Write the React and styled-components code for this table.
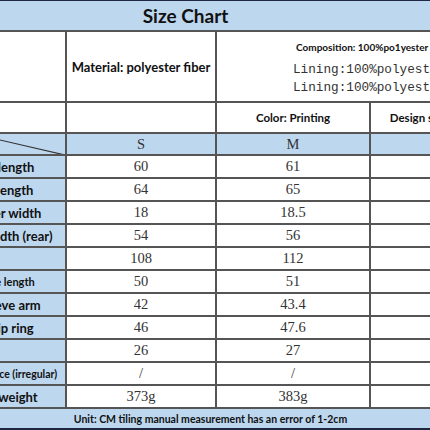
import React from 'react'
import styled, { createGlobalStyle } from 'styled-components'

const colors = {
  blue: '#bdd7ee',
  line: '#555',
  navy: '#1f2840',
  text: '#111',
  value: '#333',
}

const GlobalStyle = createGlobalStyle`
  html, body {
    margin: 0;
    padding: 0;
    background: #fff;
    overflow: hidden;
  }
`

const Viewport = styled.div`
  width: 430px;
  height: 430px;
  overflow: hidden;
  background: #fff;
`

const Sheet = styled.div`
  display: grid;
  grid-template-columns: 145px 148px 152px 150px;
  grid-template-rows: 29px 69px 29px 20px repeat(11, 21px) 19px;
  gap: 2px;
  width: max-content;
  margin-left: -80px;
  background: ${colors.line};
  border-top: 1px solid ${colors.navy};
  border-bottom: 2px solid ${colors.navy};
`

const Cell = styled.div`
  grid-column: span ${(p) => p.$span || 1};
  background: ${(p) => (p.$blue ? colors.blue : '#fff')};
  display: flex;
  align-items: center;
  justify-content: center;
  overflow: hidden;
  white-space: nowrap;
  position: relative;
`

const Title = styled(Cell)`
  padding-right: 70px;
  font-family: Lato, 'Liberation Sans', sans-serif;
  font-weight: 700;
  font-size: 19px;
  color: ${colors.text};
`

const Footer = styled(Cell)`
  padding-right: 20px;
  font-family: Lato, 'Liberation Sans', sans-serif;
  font-weight: 700;
  font-size: 10.5px;
  color: ${colors.text};
`

const Heading = styled(Cell)`
  font-family: Lato, 'Liberation Sans', sans-serif;
  font-weight: 700;
  font-size: ${(p) => p.$size || 13}px;
  color: ${colors.text};
`

const Composition = styled(Cell)`
  flex-direction: column;
  align-items: flex-start;
  justify-content: flex-start;
  padding: 9px 0 0 76px;
`

const CompTitle = styled.span`
  font-family: Lato, 'Liberation Sans', sans-serif;
  font-weight: 700;
  font-size: 10px;
  color: ${colors.text};
  margin: 0 0 8px 3px;
`

const Lining = styled.span`
  font-family: 'Liberation Mono', monospace;
  font-size: 12.7px;
  line-height: 18px;
  color: ${colors.value};
`

const Label = styled(Cell)`
  font-family: Lato, 'Liberation Sans', sans-serif;
  font-weight: 700;
  font-size: ${(p) => p.$size || 13}px;
  color: ${colors.text};
`

const Value = styled(Cell)`
  font-family: 'Liberation Serif', serif;
  font-size: 14.5px;
  color: ${colors.value};
`

const Diagonal = styled.svg`
  position: absolute;
  inset: 0;
  width: 100%;
  height: 100%;
`

const rows = [
  { label: 'Clothes length', s: '60', m: '61', l: '62' },
  { label: 'Overall length', s: '64', m: '65', l: '66' },
  { label: 'A shoulder width', s: '18', m: '18.5', l: '19' },
  { label: 'Garment width (rear)', s: '54', m: '56', l: '58' },
  { label: '', s: '108', m: '112', l: '116' },
  { label: 'Full sleeve length', s: '50', m: '51', l: '52', size: 11 },
  { label: 'Short sleeve arm', s: '42', m: '43.4', l: '44.8' },
  { label: 'Lower hip ring', s: '46', m: '47.6', l: '49.2' },
  { label: '', s: '26', m: '27', l: '28' },
  { label: 'Back elastic force (irregular)', s: '/', m: '/', l: '/', size: 10.5 },
  { label: 'Package weight', s: '373g', m: '383g', l: '393g' },
]

function App() {
  return (
    <Viewport>
      <GlobalStyle />
      <Sheet>
        <Title $span={4} $blue>Size Chart</Title>

        <Cell />
        <Heading>Material: polyester fiber</Heading>
        <Composition $span={2}>
          <CompTitle>Composition: 100%po1yester fiber</CompTitle>
          <Lining>Lining:100%polyester fiber</Lining>
          <Lining>Lining:100%polyester fiber</Lining>
        </Composition>

        <Cell />
        <Cell />
        <Heading $size={11.5}>Color: Printing</Heading>
        <Heading $size={11.5}>Design style: Loose fit</Heading>

        <Cell $blue>
          <Diagonal viewBox="0 0 145 20" preserveAspectRatio="none">
            <line x1="54" y1="0" x2="145" y2="21" stroke="#333" strokeWidth="1.2" />
          </Diagonal>
        </Cell>
        <Value $blue>S</Value>
        <Value $blue>M</Value>
        <Value $blue>L</Value>

        {rows.map((r, i) => (
          <React.Fragment key={i}>
            <Label $blue $size={r.size}>{r.label}</Label>
            <Value>{r.s}</Value>
            <Value>{r.m}</Value>
            <Value>{r.l}</Value>
          </React.Fragment>
        ))}

        <Footer $span={4} $blue>Unit: CM tiling manual measurement has an error of 1-2cm</Footer>
      </Sheet>
    </Viewport>
  )
}

export default App
